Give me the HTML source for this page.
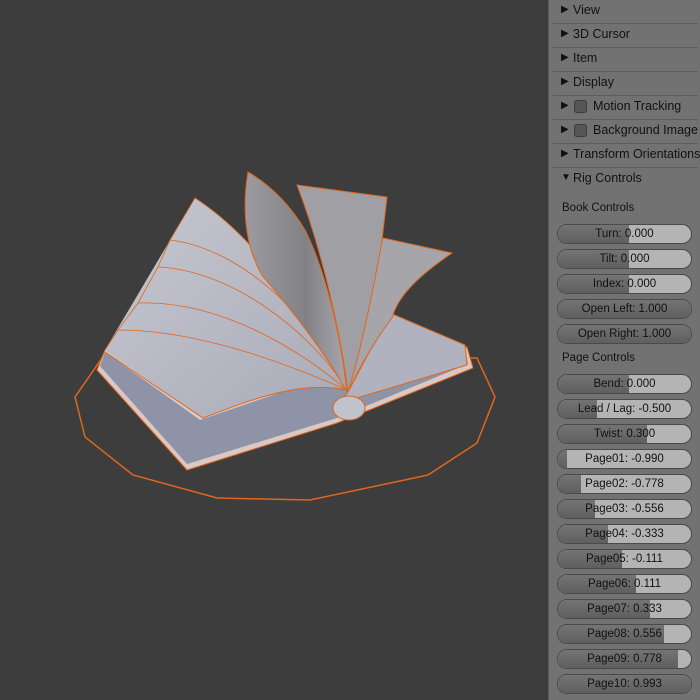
<!DOCTYPE html>
<html><head><style>
*{margin:0;padding:0;box-sizing:border-box}
body{width:700px;height:700px;background:#3d3d3d;position:relative;overflow:hidden;font-family:"Liberation Sans","DejaVu Sans",sans-serif}
#panel{position:absolute;left:548px;top:0;width:152px;height:700px;background:#727272;border-left:1px solid #5a5a5a}
.hd{position:absolute;left:4px;width:144px;height:24px;border-bottom:1px solid #5c5c5c;font-size:12.5px;color:#111;line-height:20px}
.hd .t{position:absolute;left:8px;font-size:10px;top:0}
.hd .n{position:absolute;left:20px}
.hd .cb{position:absolute;left:21px;top:4px;width:13px;height:13px;border-radius:3px;background:#555;border:1px solid #3a3a3a}
.lbl{position:absolute;left:13px;font-size:11.5px;color:#111}
.sl{position:absolute;left:8px;width:135px;height:20px;border-radius:10px;border:1px solid #4a4a4a;overflow:hidden;background:#b4b4b4}
.sl .d{position:absolute;left:0;top:0;bottom:0;background:linear-gradient(#747474,#5f5f5f)}
.sl .x{position:absolute;left:0;right:0;top:0;text-align:center;font-size:11.5px;line-height:19px;color:#111}
</style></head><body>
<svg width="548" height="700" style="position:absolute;left:0;top:0">
<defs>
<linearGradient id="pg" x1="0" y1="0" x2="1" y2="1"><stop offset="0" stop-color="#c6c7d0"/><stop offset="1" stop-color="#a9abb8"/></linearGradient>
<linearGradient id="st" x1="0" y1="0" x2="1" y2="0"><stop offset="0" stop-color="#9c9ca0"/><stop offset="0.6" stop-color="#828286"/><stop offset="1" stop-color="#a8a8ac"/></linearGradient>
</defs>
<polygon points="102,358 75,397 85,437 133,475 217,498 310,500 428,475 477,443 495,397 477,358" fill="none" stroke="#e0661c" stroke-width="1.5"/>
<polygon points="97,370 105,350 467,347 473,368 337,423 187,470" fill="#d9c8c4" stroke="#e0661c" stroke-width="1"/>
<polygon points="100,366 105,352 200,420 340,372 465,347 468,364 337,418 187,464" fill="#8f93a8"/>
<!-- left pages -->
<path d="M105,350 L195,198 C260,240 320,330 347,390 C300,380 250,400 203,418 Z" fill="url(#pg)"/>
<path d="M195,198 C260,240 320,330 347,390" stroke="#e0661c" fill="none"/>
<path d="M170,240 C250,250 320,330 347,390" stroke="#e0661c" fill="none" stroke-width="0.8"/>
<path d="M158,267 C230,270 310,330 347,390" stroke="#e0661c" fill="none" stroke-width="0.8"/>
<path d="M138,303 C220,300 300,350 347,390" stroke="#e0661c" fill="none" stroke-width="0.8"/>
<path d="M118,330 C200,330 290,365 347,390" stroke="#e0661c" fill="none" stroke-width="0.8"/>
<path d="M105,350 L118,330 L138,303 L158,267 L170,240 L195,198" stroke="#e0661c" fill="none" stroke-width="0.8"/>
<path d="M105,352 L203,418 C250,400 300,380 347,390" stroke="#e0661c" fill="none"/>
<!-- right stack -->
<polygon points="348,392 390,313 465,345 467,365 340,403" fill="#b0b2c0" stroke="#e0661c" stroke-width="1"/>
<!-- standing pages -->
<path d="M383,238 L452,253 C420,275 398,295 392,318 C375,340 358,370 348,392 C360,330 372,280 383,238 Z" fill="#a5a5aa" stroke="#e0661c" stroke-width="1"/>
<path d="M297,185 L387,197 L382,240 C372,300 358,360 348,392 C340,330 322,250 297,185 Z" fill="#a0a0a4" stroke="#e0661c" stroke-width="1"/>
<path d="M248,172 C240,220 250,255 262,275 C300,320 330,360 347,392 C340,330 325,270 305,230 C290,205 270,185 248,172 Z" fill="url(#st)" stroke="#e0661c" stroke-width="1"/>
<ellipse cx="349" cy="408" rx="16" ry="12" fill="#c0c2cc" stroke="#e0661c" stroke-width="1"/>
</svg>
<div id="panel">
<div class="hd" style="top:0"><span class="t">▶</span><span class="n">View</span></div>
<div class="hd" style="top:24px"><span class="t">▶</span><span class="n">3D Cursor</span></div>
<div class="hd" style="top:48px"><span class="t">▶</span><span class="n">Item</span></div>
<div class="hd" style="top:72px"><span class="t">▶</span><span class="n">Display</span></div>
<div class="hd" style="top:96px"><span class="t">▶</span><span class="cb"></span><span class="n" style="left:40px">Motion Tracking</span></div>
<div class="hd" style="top:120px"><span class="t">▶</span><span class="cb"></span><span class="n" style="left:40px;white-space:nowrap">Background Image</span></div>
<div class="hd" style="top:144px;white-space:nowrap"><span class="t">▶</span><span class="n">Transform Orientations</span></div>
<div class="hd" style="top:168px;border:none"><span class="t">▼</span><span class="n">Rig Controls</span></div>
<div class="lbl" style="top:202px">Book Controls</div>
<div class="sl" style="top:224px"><div class="d" style="width:71px"></div><div class="x">Turn: 0.000</div></div>
<div class="sl" style="top:249px"><div class="d" style="width:71px"></div><div class="x">Tilt: 0.000</div></div>
<div class="sl" style="top:274px"><div class="d" style="width:71px"></div><div class="x">Index: 0.000</div></div>
<div class="sl" style="top:299px"><div class="d" style="width:135px"></div><div class="x">Open Left: 1.000</div></div>
<div class="sl" style="top:324px"><div class="d" style="width:135px"></div><div class="x">Open Right: 1.000</div></div>
<div class="lbl" style="top:352px">Page Controls</div>
<div class="sl" style="top:374px"><div class="d" style="width:71px"></div><div class="x">Bend: 0.000</div></div>
<div class="sl" style="top:399px"><div class="d" style="width:39px"></div><div class="x">Lead / Lag: -0.500</div></div>
<div class="sl" style="top:424px"><div class="d" style="width:89px"></div><div class="x">Twist: 0.300</div></div>
<div class="sl" style="top:449px"><div class="d" style="width:9px"></div><div class="x">Page01: -0.990</div></div>
<div class="sl" style="top:474px"><div class="d" style="width:23px"></div><div class="x">Page02: -0.778</div></div>
<div class="sl" style="top:499px"><div class="d" style="width:37px"></div><div class="x">Page03: -0.556</div></div>
<div class="sl" style="top:524px"><div class="d" style="width:50px"></div><div class="x">Page04: -0.333</div></div>
<div class="sl" style="top:549px"><div class="d" style="width:64px"></div><div class="x">Page05: -0.111</div></div>
<div class="sl" style="top:574px"><div class="d" style="width:78px"></div><div class="x">Page06: 0.111</div></div>
<div class="sl" style="top:599px"><div class="d" style="width:92px"></div><div class="x">Page07: 0.333</div></div>
<div class="sl" style="top:624px"><div class="d" style="width:106px"></div><div class="x">Page08: 0.556</div></div>
<div class="sl" style="top:649px"><div class="d" style="width:120px"></div><div class="x">Page09: 0.778</div></div>
<div class="sl" style="top:674px"><div class="d" style="width:135px"></div><div class="x">Page10: 0.993</div></div>
</div>
</body></html>
